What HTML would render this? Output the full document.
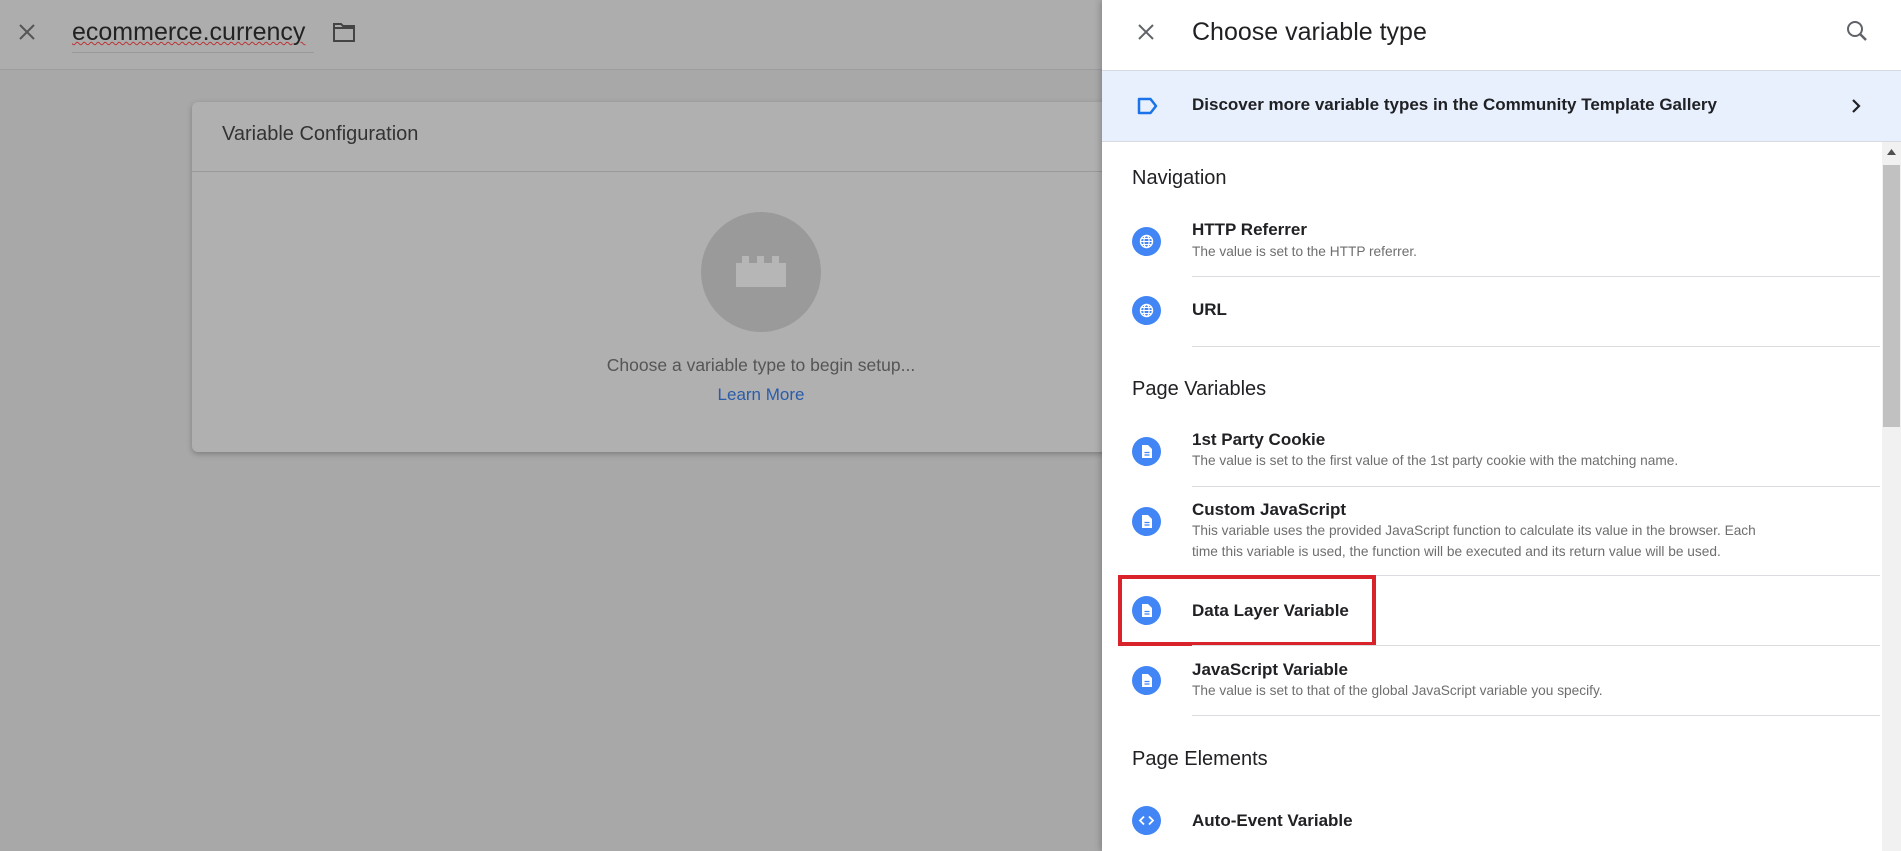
<!DOCTYPE html>
<html><head><meta charset="utf-8"><style>
*{margin:0;padding:0;box-sizing:border-box}
body{width:1901px;height:851px;overflow:hidden;position:relative;background:#a8a8a9;font-family:"Liberation Sans",Arial,sans-serif}
.a{position:absolute;white-space:nowrap}
.hdr{left:0;top:0;width:1102px;height:70px;background:#adadad;border-bottom:1px solid #9c9c9c}
.card{left:192px;top:102px;width:950px;height:350px;background:#b0b0b0;border-radius:6px;box-shadow:0 2px 6px rgba(0,0,0,.25)}
.panel{left:1102px;top:0;width:799px;height:851px;background:#fff;box-shadow:-2px 0 6px rgba(0,0,0,.2)}
.t{font-size:17px;font-weight:bold;color:#202124;line-height:20px}
.d{font-size:13.7px;color:#6e6e6e;line-height:20px}
.h{font-size:20px;color:#202124;line-height:24px}
.ic{width:29px;height:29px;border-radius:50%;background:#4285f4;left:30px}
.ic svg{position:absolute;left:0;top:0}
</style></head><body>
<div class="a hdr"></div>
<svg class="a" style="left:17px;top:22px" width="20" height="20" viewBox="0 0 20 20"><path d="M3 3L17 17M17 3L3 17" stroke="#555" stroke-width="2"/></svg>
<div class="a" style="left:72px;top:17px;font-size:25px;color:#222;line-height:30px;text-decoration:underline wavy #b33;text-decoration-thickness:1px">ecommerce.currency</div>
<div class="a" style="left:72px;top:52px;width:242px;height:1px;background:#999"></div>
<svg class="a" style="left:332px;top:21px" width="24" height="22" viewBox="0 0 24 22"><path d="M2 3h7l2 2h11v15H2z" fill="none" stroke="#444" stroke-width="2"/><path d="M2 7h20" stroke="#444" stroke-width="2"/></svg>

<div class="a card"></div>
<div class="a" style="left:222px;top:122px;font-size:20px;color:#333;line-height:24px">Variable Configuration</div>
<div class="a" style="left:192px;top:171px;width:910px;height:1px;background:#9a9a9a"></div>
<div class="a" style="left:701px;top:212px;width:120px;height:120px;border-radius:50%;background:#9a9a9b"></div>
<svg class="a" style="left:735px;top:253px" width="52" height="36" viewBox="0 0 52 36"><rect x="1" y="10" width="50" height="24" fill="#b6b6b6"/><rect x="7" y="3" width="7" height="8" fill="#b6b6b6"/><rect x="22" y="3" width="7" height="8" fill="#b6b6b6"/><rect x="37" y="3" width="7" height="8" fill="#b6b6b6"/></svg>
<div class="a" style="left:561px;top:354px;width:400px;text-align:center;font-size:17.5px;color:#555;line-height:22px">Choose a variable type to begin setup...</div>
<div class="a" style="left:561px;top:384px;width:400px;text-align:center;font-size:17px;color:#2a5caa;line-height:22px">Learn More</div>

<div class="a panel">
<svg class="a" style="left:34px;top:22px" width="20" height="20" viewBox="0 0 20 20"><path d="M3 3L17 17M17 3L3 17" stroke="#5f6368" stroke-width="2"/></svg>
<div class="a" style="left:90px;top:17px;font-size:25px;color:#202124;line-height:30px">Choose variable type</div>
<svg class="a" style="left:743px;top:19px" width="24" height="24" viewBox="0 0 24 24"><circle cx="10" cy="10" r="7" fill="none" stroke="#5f6368" stroke-width="2"/><path d="M15 15l6 6" stroke="#5f6368" stroke-width="2.5"/></svg>
<div class="a" style="left:0;top:70px;width:799px;height:72px;background:#e8f0fe;border-top:1px solid #d6dbe3;border-bottom:1px solid #d6dbe3"></div>
<svg class="a" style="left:33px;top:96px" width="26" height="20" viewBox="0 0 26 20"><path d="M4 3h11.5l5.5 7-5.5 7H4z" fill="none" stroke="#1a73e8" stroke-width="2.5" stroke-linejoin="round"/></svg>
<div class="a t" style="left:90px;top:95px">Discover more variable types in the Community Template Gallery</div>
<svg class="a" style="left:747px;top:97px" width="14" height="18" viewBox="0 0 14 18"><path d="M4 3l6 6-6 6" fill="none" stroke="#202124" stroke-width="2.2"/></svg>

<div class="a" style="left:780px;top:142px;width:19px;height:709px;background:#f1f1f1"></div>
<div class="a" style="left:781px;top:165px;width:17px;height:262px;background:#c1c1c1"></div>
<svg class="a" style="left:785px;top:149px" width="9" height="6"><path d="M0 6L4.5 0L9 6z" fill="#505050"/></svg>

<div class="a h" style="left:30px;top:166px">Navigation</div>
<div class="a ic" style="top:227px"><svg width="29" height="29" viewBox="0 0 29 29"><circle cx="14.5" cy="14.5" r="6" fill="none" stroke="#fff" stroke-width="1.4"/><ellipse cx="14.5" cy="14.5" rx="2.6" ry="6" fill="none" stroke="#fff" stroke-width="1.2"/><path d="M8.5 14.5h12M9.5 11.5h10M9.5 17.5h10" stroke="#fff" stroke-width="1.1"/></svg></div>
<div class="a t" style="left:90px;top:220px">HTTP Referrer</div>
<div class="a d" style="left:90px;top:242px">The value is set to the HTTP referrer.</div>
<div class="a" style="left:90px;top:276px;width:688px;height:1px;background:#dadce0"></div>
<div class="a ic" style="top:296px"><svg width="29" height="29" viewBox="0 0 29 29"><circle cx="14.5" cy="14.5" r="6" fill="none" stroke="#fff" stroke-width="1.4"/><ellipse cx="14.5" cy="14.5" rx="2.6" ry="6" fill="none" stroke="#fff" stroke-width="1.2"/><path d="M8.5 14.5h12M9.5 11.5h10M9.5 17.5h10" stroke="#fff" stroke-width="1.1"/></svg></div>
<div class="a t" style="left:90px;top:300px">URL</div>
<div class="a" style="left:90px;top:346px;width:688px;height:1px;background:#dadce0"></div>

<div class="a h" style="left:30px;top:377px">Page Variables</div>
<div class="a ic" style="top:437px"><svg width="29" height="29" viewBox="0 0 29 29"><path d="M10 8h6l4 4v9H10z" fill="#fff"/><path d="M12.5 15.5h5M12.5 18h5" stroke="#4285f4" stroke-width="1.2"/></svg></div>
<div class="a t" style="left:90px;top:430px">1st Party Cookie</div>
<div class="a d" style="left:90px;top:451px">The value is set to the first value of the 1st party cookie with the matching name.</div>
<div class="a" style="left:90px;top:486px;width:688px;height:1px;background:#dadce0"></div>
<div class="a ic" style="top:507px"><svg width="29" height="29" viewBox="0 0 29 29"><path d="M10 8h6l4 4v9H10z" fill="#fff"/><path d="M12.5 15.5h5M12.5 18h5" stroke="#4285f4" stroke-width="1.2"/></svg></div>
<div class="a t" style="left:90px;top:500px">Custom JavaScript</div>
<div class="a d" style="left:90px;top:521px">This variable uses the provided JavaScript function to calculate its value in the browser. Each</div>
<div class="a d" style="left:90px;top:542px">time this variable is used, the function will be executed and its return value will be used.</div>
<div class="a" style="left:90px;top:575px;width:688px;height:1px;background:#dadce0"></div>
<div class="a ic" style="top:596px"><svg width="29" height="29" viewBox="0 0 29 29"><path d="M10 8h6l4 4v9H10z" fill="#fff"/><path d="M12.5 15.5h5M12.5 18h5" stroke="#4285f4" stroke-width="1.2"/></svg></div>
<div class="a t" style="left:90px;top:601px">Data Layer Variable</div>
<div class="a" style="left:16px;top:575px;width:258px;height:71px;border:4px solid #d9232a"></div>
<div class="a" style="left:90px;top:645px;width:688px;height:1px;background:#dadce0"></div>
<div class="a ic" style="top:666px"><svg width="29" height="29" viewBox="0 0 29 29"><path d="M10 8h6l4 4v9H10z" fill="#fff"/><path d="M12.5 15.5h5M12.5 18h5" stroke="#4285f4" stroke-width="1.2"/></svg></div>
<div class="a t" style="left:90px;top:660px">JavaScript Variable</div>
<div class="a d" style="left:90px;top:681px">The value is set to that of the global JavaScript variable you specify.</div>
<div class="a" style="left:90px;top:715px;width:688px;height:1px;background:#dadce0"></div>

<div class="a h" style="left:30px;top:747px">Page Elements</div>
<div class="a ic" style="top:806px"><svg width="29" height="29" viewBox="0 0 29 29"><path d="M12 10.5l-4 4 4 4M17 10.5l4 4-4 4" fill="none" stroke="#fff" stroke-width="1.8"/></svg></div>
<div class="a t" style="left:90px;top:811px">Auto-Event Variable</div>
</div>
</body></html>
